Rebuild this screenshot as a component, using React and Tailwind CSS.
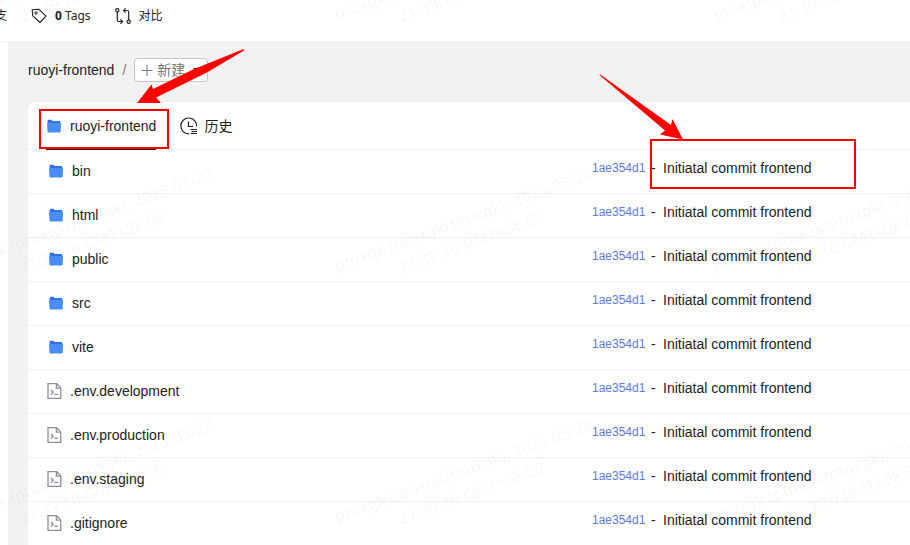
const folders = ['bin', 'html', 'public', 'src', 'vite'];
const files = ['.env.development', '.env.production', '.env.staging', '.gitignore'];

function FolderIcon() {
  return (
    <svg className="h-4 w-4 shrink-0" viewBox="0 0 16 16" aria-hidden="true">
      <path d="M1.600 3C1.600 2.200 2 1.700 2.700 1.700h2.500c.5 0 .8.3 1 .7l.4.7h6.600c.7 0 1.100.4 1.100 1.100V8H1.600z" fill="#2f74ee" />
      <path d="M1 5.800c0-.6.3-.9.900-.9h12.300c.6 0 .9.300.9.900l-.5 7.700c0 .6-.4 1-1 1H2.500c-.6 0-1-.4-1-1z" fill="#4a8df8" />
    </svg>
  );
}

function FileIcon() {
  return (
    <svg className="h-4 w-4 shrink-0" viewBox="0 0 16 16" fill="none" stroke="#8b8e9b" strokeWidth="1.300" aria-hidden="true">
      <path d="M2 .7h8.600l4.200 4.200v10.400H2z" />
      <path d="M10.400.8v4.300h4.400" />
      <path d="M5 7l2.200 2.300L5 11.600M8.400 11.400h3.500" />
    </svg>
  );
}

function TagIcon() {
  return (
    <svg className="h-4 w-4" viewBox="0 0 16 16" fill="none" stroke="#222" aria-hidden="true">
      <path d="M1.200 1.800L8 1.300l7 6.900-6 6.300L1.700 7.800z" strokeLinejoin="round" strokeWidth="1.100" />
      <circle cx="5" cy="5" r="1.200" />
    </svg>
  );
}

function CompareIcon() {
  return (
    <svg className="h-4 w-4" viewBox="0 0 16 16" fill="none" stroke="#222" strokeWidth="1.200" aria-hidden="true">
      <circle cx="2.300" cy="2.200" r="1.600" />
      <circle cx="13.700" cy="13.800" r="1.600" />
      <path d="M2.300 3.900v8.100q0 1.500 1.500 1.500h3.400M5.400 11.300l2.200 2.200-2.200 2.200M13.700 12.100V4q0-1.500-1.500-1.500H8.800M10.600.3L8.400 2.500l2.200 2.200" />
    </svg>
  );
}

function HistoryIcon() {
  return (
    <svg className="h-[18px] w-[18px]" viewBox="0 0 18 18" fill="none" stroke="#222" aria-hidden="true">
      <path d="M16.600 9.500A7.900 7.900 0 1 0 9 16.800" strokeWidth="1.200" />
      <path d="M8.500 4.500v5h4.500" strokeWidth="1.200" />
      <path d="M10.500 12.500h6.500M11.500 14.500h5.500M10.500 16.500h6.500" />
    </svg>
  );
}

function Row({ name, folder }) {
  return (
    <tr>
      <td className="h-11 w-[564px] border-b border-[#f0f0f0] p-0 pb-0.5 align-middle">
        <a href="#" className={folder ? 'flex items-center gap-2 pl-5' : 'flex items-center gap-2 pl-[18px]'}>
          {folder ? <FolderIcon /> : <FileIcon />}
          <span>{name}</span>
        </a>
      </td>
      <td className="border-b border-[#f0f0f0] p-0 pb-2 align-middle whitespace-nowrap">
        <div className="flex items-center">
          <a href="#" className="w-[59px] text-xs text-[#5b7be0]">1ae354d1</a>
          <span className="w-3">-</span>
          <a href="#">Initiatal commit frontend</a>
        </div>
      </td>
    </tr>
  );
}

function Watermark() {
  const tiles = [];
  for (const y of [-251, 0, 251]) {
    for (const x of [0, 379, 758]) tiles.push([x, y]);
  }
  return (
    <svg
      className="pointer-events-none absolute inset-0 h-full w-full font-['Noto_Sans','Noto_Sans_CJK_SC',sans-serif] text-base font-medium"
      fill="#000"
      fillOpacity="0.04"
      textAnchor="middle"
      aria-hidden="true"
    >
      {tiles.map(([x, y]) => (
        <g key={`${x},${y}`} transform={`translate(${x + 86} ${y + 225}) rotate(-20)`}>
          <text>ptuxgk (ptuxgk/ptuxgk), 2025-05-20</text>
          <text y="24">21:39:10 GMT+08:00</text>
        </g>
      ))}
    </svg>
  );
}

function Annotations() {
  return (
    <svg className="pointer-events-none absolute inset-0 h-full w-full" fill="none" aria-hidden="true">
      <rect x="40" y="110" width="128" height="38" stroke="#f00" strokeWidth="2" />
      <rect x="651" y="140" width="204" height="48" stroke="#f00" strokeWidth="2" />
      <path d="M243.500 49L193 69.500 153 89l-1.500-4.500L137 103h24l-5-5.500L206 73 244 50.500z" fill="#f00" />
      <path d="M599.500 74L671 125l1.500-6 10.500 20.500-23-5 5-4-65-55z" fill="#f00" />
    </svg>
  );
}

export default function App() {
  return (
    <div className="relative h-screen overflow-hidden bg-white font-['Liberation_Sans','Noto_Sans_CJK_SC',sans-serif] text-sm leading-5 text-[#222]">
      <header className="flex h-[42px] items-start border-b border-[#f2f2f2] pt-1.5 font-['Noto_Sans','Noto_Sans_CJK_SC',sans-serif] text-xs">
        <nav className="-ml-[5px] flex h-5 items-center gap-6">
          <a href="#">支</a>
          <a href="#" className="flex items-center gap-2">
            <TagIcon />
            <span><b>0</b> Tags</span>
          </a>
          <a href="#" className="flex items-center gap-2">
            <CompareIcon />
            <span>对比</span>
          </a>
        </nav>
      </header>
      <main className="ml-2 h-full bg-[#f2f2f2] pl-5 pt-4">
        <div className="flex h-6 items-center">
          <a href="#">ruoyi-frontend</a>
          <span className="px-2 text-[#777]">/</span>
          <button type="button" className="flex h-6 items-center rounded border border-[#c4c4c4] bg-white px-1.5 text-[#777]">
            <svg className="mr-1 h-3 w-3" viewBox="0 0 12 12" stroke="#777" aria-hidden="true">
              <path d="M.5 6.500h11M6 1v11" />
            </svg>
            新建
            <svg className="ml-2 h-1 w-2" viewBox="0 0 8 4" fill="#222" aria-hidden="true">
              <path d="M0 0h8L4 4z" />
            </svg>
          </button>
        </div>
        <section className="mt-5 rounded-tl-lg bg-white">
          <div className="flex h-12 items-stretch gap-6 border-b border-[#f0f0f0] pl-[18px]">
            <a href="#" className="-mb-px flex items-center gap-2 border-b-2 border-[#222] pt-0.5">
              <FolderIcon />
              <span>ruoyi-frontend</span>
            </a>
            <a href="#" className="flex items-center gap-1.5">
              <HistoryIcon />
              <span>历史</span>
            </a>
          </div>
          <table className="w-full border-separate border-spacing-0">
            <tbody>
              {folders.map((n) => <Row key={n} name={n} folder />)}
              {files.map((n) => <Row key={n} name={n} />)}
            </tbody>
          </table>
        </section>
      </main>
      <Watermark />
      <Annotations />
    </div>
  );
}
